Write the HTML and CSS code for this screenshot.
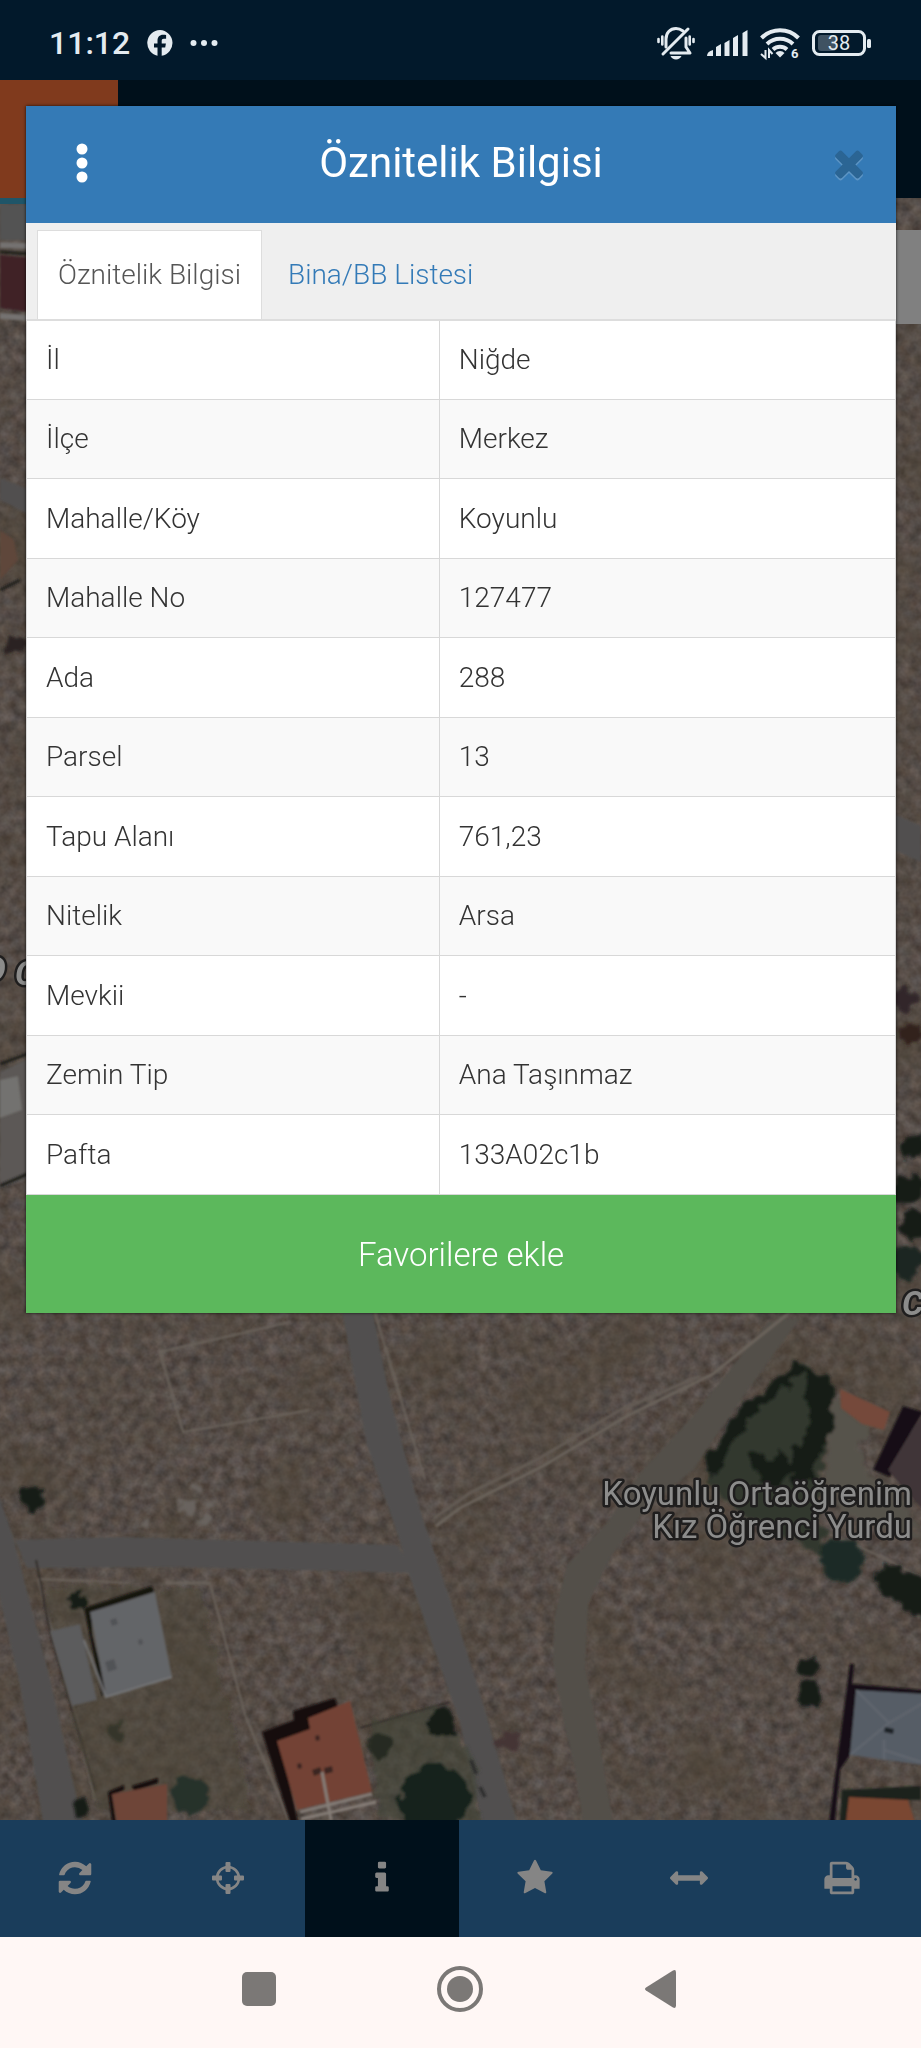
FILE: index.html
```html
<!DOCTYPE html>
<html lang="tr">
<head>
  <meta charset="UTF-8" />
  <title>Öznitelik Bilgisi</title>
  <meta name="viewport" content="width=device-width, initial-scale=1" />
  <link rel="stylesheet" href="styles.css">
</head>
<body>
  <div class="status-bar">
    <span class="clock">11:12</span>
    <svg class="fb-icon" viewBox="0 0 26 26" width="26" height="26" aria-hidden="true">
      <path fill="currentColor" d="M13 0a13 13 0 0 0-2.500 25.700v-8.200H7v-4h3.500v-2.500c0-4 2-6.200 5.600-6.200 1.200 0 2.300.1 3 .3v3.600h-2.200c-1.700 0-2.200.8-2.200 2.200v2.600h4.200l-.7 4h-3.500v8.300A13 13 0 0 0 13 0z"/>
    </svg>
    <svg class="more-icon" viewBox="0 0 28 8" width="28" height="8" aria-hidden="true">
      <g fill="currentColor"><circle cx="3.500" cy="4" r="3"/><circle cx="14" cy="4" r="3"/><circle cx="24.500" cy="4" r="3"/></g>
    </svg>
    <div class="status-icons">
      <svg viewBox="0 0 38 34" width="38" height="34" aria-hidden="true">
        <g fill="none" stroke="currentColor" stroke-width="3" stroke-linecap="round" stroke-linejoin="round">
          <path d="M9 21v-8c0-6 4-10.500 10-10.500 3 0 5 1 7 2.500M29 12v9l4 6H14"/>
          <path d="M31 3L6 28"/>
        </g>
        <g stroke="currentColor" stroke-width="2.600" stroke-linecap="round">
          <path d="M1.500 13v3M5.300 10.500v8M32.700 10.500v8M36.500 13v3"/>
        </g>
        <path fill="currentColor" d="M13.500 30h11c-1 2.200-3 3.500-5.500 3.500s-4.500-1.300-5.500-3.500z"/>
      </svg>
      <svg viewBox="0 0 41 28" width="41" height="28" aria-hidden="true">
        <path fill="currentColor" d="M0 27c0-3 2-5 6-6v6zM9 18l5-3v12H9zM17.500 14l5-3v16h-5zM26 9l5-3v21h-5zM35.500 4l5-3v26h-5z"/>
      </svg>
      <svg class="wifi-icon" viewBox="0 0 40 36" width="40" height="36" aria-hidden="true">
        <g fill="none" stroke="currentColor" stroke-width="4">
          <path d="M1.500 13a26 26 0 0 1 37 0M7 19a19 19 0 0 1 26 0M13 24.500a10.500 10.500 0 0 1 14 0"/>
        </g>
        <path fill="currentColor" d="M15.500 28a6 6 0 0 1 9 0L20 32.500z"/>
        <path fill="none" stroke="currentColor" stroke-width="2" d="M5.500 25v8L1 29M9 33v-8l3.500 4"/>
        <text x="31" y="33" font-size="13" font-weight="700" fill="currentColor">6</text>
      </svg>
      <svg viewBox="0 0 60 26" width="60" height="26" aria-hidden="true">
        <rect x="1.500" y="1.500" width="51" height="23" rx="6" fill="none" stroke="currentColor" stroke-width="3"/>
        <rect x="6" y="5" width="18" height="16" rx="3" fill="#3f5262"/>
        <rect x="55" y="9" width="4" height="9" rx="1.500" fill="currentColor"/>
        <text x="27" y="20" font-size="20" font-weight="400" text-anchor="middle" fill="currentColor">38</text>
      </svg>
    </div>
  </div>

  <div class="app">
    <div class="app-header">
      <div class="app-menu"></div>
    </div>

    <div class="map">
      <svg class="map-canvas" viewBox="0 198 921 1622" preserveAspectRatio="xMidYMid slice" aria-hidden="true">
        <defs>
          <filter id="ground" x="0" y="0" width="100%" height="100%" color-interpolation-filters="sRGB">
            <feTurbulence type="fractalNoise" baseFrequency="0.090" numOctaves="3" seed="7"/>
            <feColorMatrix values="0.200 0.060 0 0 0.205  0.200 0.020 0 0 0.190  0.200 0 0.030 0 0.165  0 0 0 0 1"/>
          </filter>
          <filter id="patches" x="0" y="0" width="100%" height="100%" color-interpolation-filters="sRGB">
            <feTurbulence type="fractalNoise" baseFrequency="0.012" numOctaves="3" seed="3"/>
            <feColorMatrix values="0 0 0 0 0.300  0 0 0 0 0.260  0 0 0 0 0.200  1.200 0 0 0 -0.500"/>
          </filter>
          <filter id="rough" x="-10%" y="-10%" width="120%" height="120%">
            <feTurbulence type="fractalNoise" baseFrequency="0.080" numOctaves="3" seed="5" result="n"/>
            <feDisplacementMap in="SourceGraphic" in2="n" scale="16" xChannelSelector="R" yChannelSelector="G"/>
            <feGaussianBlur stdDeviation="1.500"/>
          </filter>
          <filter id="soft" x="-10%" y="-10%" width="120%" height="120%">
            <feGaussianBlur stdDeviation="1"/>
          </filter>
        </defs>

        <rect y="198" width="921" height="1622" filter="url(#ground)"/>
        <rect y="198" width="921" height="1622" filter="url(#patches)"/>

        <!-- roads -->
        <g filter="url(#soft)">
          <g fill="#51504f">
            <path d="M340 1300L370 1300 388 1390 417 1500 440 1570 460 1630 485 1710 517 1822 482 1822 460 1723 430 1637 405 1562 400 1541 367 1445z"/>
            <path d="M15 1540L120 1537 397 1545 415 1573 300 1570 180 1567 27 1568z"/>
            <path d="M-2 1494L13 1537 30 1603 50 1679 82 1822 43 1822 20 1685 -2 1590z"/>
            <path d="M0 478L30 490 30 515 0 500zM890 812L921 826 921 862 890 848z"/>
            <path d="M0 1072L30 1058 30 1178 0 1188z" fill="#5b5956"/>
          </g>
          <path fill="#534f4a" d="M768 1322L693 1416 640 1473 607 1523 567 1565 555 1615 553 1661 563 1718 575 1768 583 1822 613 1822 598 1734 585 1669 588 1604 610 1558 647 1508 693 1470 743 1397 800 1318z"/>
          <g fill="none" stroke="#6b635b" stroke-width="3">
            <path d="M436 1526L460 1508 543 1466 627 1416 713 1374 790 1312"/>
            <path d="M434 1518L470 1493 540 1458 620 1410 700 1376" stroke="#645c55"/>
          </g>
          <g fill="none" stroke="#6b635c" stroke-width="2">
            <path d="M290 1322L160 1352 183 1432 310 1410"/>
            <path d="M38 1579L73 1707 95 1800M38 1579L130 1583M165 1583L210 1583 225 1640 245 1715 270 1775 290 1822"/>
            <path d="M375 1313L410 1430 425 1480M740 1500L820 1530 880 1556 921 1577M200 1785L165 1795"/>
          </g>
          <path d="M360 1728L450 1702M36 1560L50 1630 95 1790" fill="none" stroke="#302c28" stroke-width="2"/>
        </g>

        <!-- gardens -->
        <g filter="url(#rough)">
          <path fill="#4a4639" opacity="0.500" d="M45 1590L80 1585 200 1590 240 1760 250 1810 100 1810 70 1710z"/>
          <path fill="#3f4636" opacity="0.600" d="M370 1722L440 1705 475 1760 480 1822 380 1822z"/>
          <path fill="#33392e" d="M703 1466L727 1428 743 1405 797 1362 832 1380 828 1440 815 1500 830 1560 770 1530 723 1500z"/>
          <path fill="#57524b" d="M833 1400L880 1410 860 1450 870 1480 900 1490 921 1540 850 1520 825 1480z"/>
          <g fill="#121a17">
            <path d="M703 1466L727 1428 743 1405 797 1362 805 1372 760 1410 735 1440 715 1478z"/>
            <path d="M803 1368L832 1378 832 1430 808 1480 800 1450 810 1410z"/>
            <path d="M745 1452L757 1450 772 1460 780 1450 795 1470 770 1490zM790 1450L815 1440 815 1480 795 1490z"/>
            <circle cx="842" cy="1560" r="22" fill="#1b2a25"/>
            <circle cx="890" cy="1580" r="16"/><circle cx="910" cy="1590" r="18"/><circle cx="922" cy="1608" r="12"/>
            <circle cx="32" cy="1498" r="12"/><circle cx="808" cy="1668" r="11"/><circle cx="809" cy="1695" r="12"/>
            <circle cx="442" cy="1722" r="14"/><circle cx="435" cy="1800" r="36" fill="#14211c"/>
            <circle cx="190" cy="1795" r="18" fill="#27302a"/><circle cx="82" cy="1808" r="8"/><circle cx="79" cy="1600" r="8"/>
            <circle cx="117" cy="1732" r="9" fill="#343529"/><circle cx="380" cy="1745" r="13" fill="#272c20"/>
            <circle cx="914" cy="1148" r="13"/><circle cx="906" cy="1190" r="16"/><circle cx="916" cy="1225" r="15"/><circle cx="906" cy="1262" r="17" fill="#1d2820"/>
            <circle cx="15" cy="645" r="10" fill="#2c2220"/><circle cx="905" cy="1000" r="12" fill="#33282a"/><circle cx="910" cy="1035" r="11" fill="#30201f"/>
            <circle cx="510" cy="1741" r="10" fill="#453536"/>
          </g>
          <g fill="#69635e">
            <circle cx="196" cy="1488" r="5"/><circle cx="190" cy="1508" r="7"/><circle cx="203" cy="1520" r="6"/>
            <circle cx="180" cy="1504" r="4"/><circle cx="146" cy="1522" r="4"/><circle cx="212" cy="1504" r="4"/>
          </g>
        </g>

        <!-- buildings -->
        <g filter="url(#soft)">
          <path fill="#5c5c5d" d="M50 1631L80 1624 97 1700 72 1706z"/>
          <path fill="#171210" d="M84 1608L152 1586 154 1592 92 1612 92 1635 108 1692 102 1696z"/>
          <path fill="#646567" d="M90 1612L155 1592 172 1677 106 1697z"/>
          <path fill="none" stroke="#757678" stroke-width="2" d="M172 1677L106 1697 84 1640"/>
          <path fill="#515357" d="M105 1662l9-3 3 10-9 3zM110 1620l6-2 2 6-6 2zM138 1640l4-1 1 5-4 1z"/>
          <path fill="#140b0b" d="M262 1732L294 1720 293 1711 335 1698 338 1708 310 1722 310 1732 280 1742 298 1822 290 1822z"/>
          <path fill="#734335" d="M277 1741L310 1729 308 1718 350 1701 372 1792 297 1810z"/>
          <path fill="#3a2522" d="M312 1770l8-3 2 6-8 3zM324 1768l8-2 1 6-8 2zM297 1764l4-1 1 5-4 1zM315 1736l4-1 1 5-4 1z"/>
          <path fill="none" stroke="#857d77" stroke-width="3" d="M322 1772l9 48M300 1812l72-18M301 1819l75-17"/>
          <path fill="#140b0b" d="M108 1792L124 1785 124 1790 112 1795 116 1822 112 1822zM132 1786L158 1778 158 1783 134 1791z"/>
          <path fill="#6e4439" d="M112 1794L167 1784 167 1822 117 1822z"/>
          <path fill="#74493a" d="M840 1389L890 1412 884 1430 862 1424 841 1408z"/>
          <path fill="#131012" d="M903 1406L923 1412 912 1430 890 1477 873 1470z"/>
          <path fill="#3f3438" d="M912 1430L923 1414 923 1510 888 1470z"/>
          <path fill="#131012" d="M850 1664L854 1664 852 1684 923 1690 923 1694 856 1692 850 1755 840 1770 835 1822 829 1822z"/>
          <path fill="#575d66" d="M856 1690L923 1694 923 1765 850 1755z"/>
          <path fill="none" stroke="#62676f" stroke-width="2" d="M856 1690l33 33 34-20M889 1723l-39 32M884 1740v20M884 1750l37 12"/>
          <path fill="#1c2026" d="M885 1727l9 2-1 5-9-2z"/>
          <path fill="#1c211d" d="M842 1790L921 1786 921 1800 850 1800 850 1822 840 1822z"/>
          <path fill="#7a4632" d="M849 1797L908 1800 915 1822 846 1822z"/>
          <path fill="#402227" d="M0 255L30 258 30 312 0 308z"/>
          <path fill="#535252" d="M0 204L30 204 30 240 0 240z"/>
          <path fill="none" stroke="#747271" stroke-width="6" d="M0 245L30 246M0 316L30 318"/>
          <path fill="none" stroke="#22201e" stroke-width="3" d="M0 252L30 254M0 1064L30 1053M0 1186L30 1173M0 590L20 580"/>
          <path fill="#5f463a" d="M0 530L14 540 18 560 0 580z"/>
          <path fill="#737270" d="M0 1080L18 1076 22 1110 0 1118z"/>
          <path fill="none" stroke="#2c2c2c" stroke-width="3" d="M471 1760l5 14M480 1787l5 10"/>
        </g>

        <rect class="teal-edge" y="198" width="118" height="6"/>
        <g class="map-label">
          <text x="912" y="1505" text-anchor="end">Koyunlu Ortaöğrenim</text>
          <text x="912" y="1538" text-anchor="end">Kız Öğrenci Yurdu</text>
        </g>
        <g class="road-label">
          <text x="-17" y="981">O</text>
          <text x="15" y="985">C</text>
          <text x="902" y="1315">C</text>
        </g>
      </svg>
      <div class="map-control"></div>
    </div>

    <div class="toolbar">
      <button class="tool" aria-label="Yenile">
        <svg viewBox="0 0 1792 1792"><path d="M1639 1056q0 5-1 7-64 268-268 434.500t-478 166.500q-146 0-282.500-55t-243.500-157l-129 129q-19 19-45 19t-45-19-19-45v-448q0-26 19-45t45-19h448q26 0 45 19t19 45-19 45l-137 137q71 66 161 102t187 36q134 0 250-65t186-179q11-17 53-117 8-23 30-23h192q13 0 22.500 9.500t9.500 22.500zm25-800v448q0 26-19 45t-45 19h-448q-26 0-45-19t-19-45 19-45l138-138q-148-137-349-137-134 0-250 65t-186 179q-11 17-53 117-8 23-30 23h-199q-13 0-22.500-9.500t-9.500-22.500v-7q65-268 270-434.500t480-166.500q146 0 284 55.500t245 156.500l130-129q19-19 45-19t45 19 19 45z"/></svg>
      </button>
      <button class="tool" aria-label="Konum">
        <svg viewBox="0 0 38 38"><circle cx="19" cy="19" r="11" fill="none" stroke="currentColor" stroke-width="2.600"/><path d="M17.500 3h3a1 1 0 0 1 1 1v8a1 1 0 0 1-1 1h-3a1 1 0 0 1-1-1V4a1 1 0 0 1 1-1zM17.500 25h3a1 1 0 0 1 1 1v8a1 1 0 0 1-1 1h-3a1 1 0 0 1-1-1v-8a1 1 0 0 1 1-1zM4 16.500h8a1 1 0 0 1 1 1v3a1 1 0 0 1-1 1H4a1 1 0 0 1-1-1v-3a1 1 0 0 1 1-1zM26 16.500h8a1 1 0 0 1 1 1v3a1 1 0 0 1-1 1h-8a1 1 0 0 1-1-1v-3a1 1 0 0 1 1-1z"/></svg>
      </button>
      <button class="tool active" aria-label="Bilgi">
        <svg viewBox="0 0 1792 1792"><path d="M1216 1344v128q0 26-19 45t-45 19h-512q-26 0-45-19t-19-45v-128q0-26 19-45t45-19h64v-384h-64q-26 0-45-19t-19-45v-128q0-26 19-45t45-19h384q26 0 45 19t19 45v576h64q26 0 45 19t19 45zm-128-1152v192q0 26-19 45t-45 19h-256q-26 0-45-19t-19-45v-192q0-26 19-45t45-19h256q26 0 45 19t19 45z"/></svg>
      </button>
      <button class="tool" aria-label="Favoriler">
        <svg viewBox="0 0 1792 1792"><path d="M1728 647q0 22-26 48l-363 354 86 500q1 7 1 20 0 21-10.500 35.500t-30.500 14.500q-19 0-40-12l-449-236-449 236q-22 12-40 12-21 0-31.500-14.500t-10.500-35.500q0-6 2-20l86-500-364-354q-25-27-25-48 0-37 56-46l502-73 225-455q19-41 49-41t49 41l225 455 502 73q56 9 56 46z"/></svg>
      </button>
      <button class="tool" aria-label="Ölç">
        <svg viewBox="0 0 1792 1792"><path d="M1792 896q0 26-19 45l-256 256q-19 19-45 19t-45-19-19-45v-128h-1024v128q0 26-19 45t-45 19-45-19l-256-256q-19-19-19-45t19-45l256-256q19-19 45-19t45 19 19 45v128h1024v-128q0-26 19-45t45-19 45 19l256 256q19 19 19 45z"/></svg>
      </button>
      <button class="tool" aria-label="Yazdır">
        <svg viewBox="0 0 1792 1792"><path d="M448 1536h896v-256h-896v256zm0-640h896v-384h-160q-40 0-68-28t-28-68v-160h-640v640zm1152 64q0-26-19-45t-45-19-45 19-19 45 19 45 45 19 45-19 19-45zm128 0v416q0 13-9.500 22.500t-22.500 9.500h-224v160q0 40-28 68t-68 28h-960q-40 0-68-28t-28-68v-160h-224q-13 0-22.500-9.500t-9.500-22.500v-416q0-79 56.500-135.500t135.500-56.500h64v-544q0-40 28-68t68-28h672q40 0 88 20t76 48l152 152q28 28 48 76t20 88v256h64q79 0 135.500 56.500t56.500 135.500z"/></svg>
      </button>
    </div>

    <div class="modal">
      <div class="dialog" role="dialog" aria-labelledby="dialogTitle">
        <div class="dialog-header">
          <button class="menu-btn" aria-label="Menü">
            <svg viewBox="0 0 12 40" width="12" height="40"><g fill="currentColor"><circle cx="6" cy="6" r="5.500"/><circle cx="6" cy="20" r="5.500"/><circle cx="6" cy="34" r="5.500"/></g></svg>
          </button>
          <h1 class="dialog-title" id="dialogTitle">Öznitelik Bilgisi</h1>
          <button class="close-btn" aria-label="Kapat">
            <svg viewBox="0 0 1792 1792" width="42" height="42"><path fill="currentColor" d="M1490 1322q0 40-28 68l-136 136q-28 28-68 28t-68-28l-294-294-294 294q-28 28-68 28t-68-28l-136-136q-28-28-28-68t28-68l294-294-294-294q-28-28-28-68t28-68l136-136q28-28 68-28t68 28l294 294 294-294q28-28 68-28t68 28l136 136q28 28 28 68t-28 68l-294 294 294 294q28 28 28 68z"/></svg>
          </button>
        </div>
        <div class="tabs">
          <a class="tab active" href="#oznitelik">Öznitelik Bilgisi</a>
          <a class="tab" href="#bina">Bina/BB Listesi</a>
        </div>
        <table class="info-table" id="oznitelik">
          <tbody>
            <tr><th scope="row">İl</th><td>Niğde</td></tr>
            <tr><th scope="row">İlçe</th><td>Merkez</td></tr>
            <tr><th scope="row">Mahalle/Köy</th><td>Koyunlu</td></tr>
            <tr><th scope="row">Mahalle No</th><td>127477</td></tr>
            <tr><th scope="row">Ada</th><td>288</td></tr>
            <tr><th scope="row">Parsel</th><td>13</td></tr>
            <tr><th scope="row">Tapu Alanı</th><td>761,23</td></tr>
            <tr><th scope="row">Nitelik</th><td>Arsa</td></tr>
            <tr><th scope="row">Mevkii</th><td>-</td></tr>
            <tr><th scope="row">Zemin Tip</th><td>Ana Taşınmaz</td></tr>
            <tr><th scope="row">Pafta</th><td>133A02c1b</td></tr>
          </tbody>
        </table>
        <button class="favorite-btn">Favorilere ekle</button>
      </div>
    </div>
  </div>

  <div class="nav-bar">
    <button class="nav-btn" aria-label="Son uygulamalar">
      <svg viewBox="0 0 48 48"><rect x="7" y="7" width="34" height="34" rx="5"/></svg>
    </button>
    <button class="nav-btn" aria-label="Ana ekran">
      <svg viewBox="0 0 48 48"><circle cx="24" cy="24" r="21" fill="none" stroke="currentColor" stroke-width="4"/><circle cx="24" cy="24" r="13"/></svg>
    </button>
    <button class="nav-btn" aria-label="Geri">
      <svg viewBox="0 0 48 48"><path d="M9 22.500L36 5.500q3-1.500 3 2v33q0 3.500-3 2L9 25.500q-2-1.500 0-3z"/></svg>
    </button>
  </div>
</body>
</html>
```
FILE: styles.css
```css
* { box-sizing: border-box; }
body { margin: 0; min-height: 100vh; display: flex; flex-direction: column; font-family: Roboto, "Noto Sans", sans-serif; font-weight: 300; font-size: 28px; color: #333; background: #02192b; }
button { font: inherit; border: none; background: none; padding: 0; cursor: pointer; }

/* phone status bar */
.status-bar { display: flex; align-items: center; height: 80px; padding: 6px 49px 0; background: #02192b; color: #e4ebf0; }
.clock { font-size: 32px; font-weight: 500; line-height: 40px; }
.fb-icon { margin-left: 17px; }
.more-icon { margin-left: 17px; }
.status-icons { display: flex; align-items: center; gap: 12px; margin-left: auto; }

/* app behind the dialog */
.app { position: relative; flex: 1; display: flex; flex-direction: column; }
.app-header { display: flex; height: 118px; background: #00101b; }
.app-menu { width: 118px; background: #803a1d; }
.map { position: relative; flex: 1; overflow: hidden; background: #57504b; }
.map-canvas { position: absolute; inset: 0; width: 100%; height: 100%; }
.teal-edge { fill: #1f5568; }
.map-label text, .road-label text { fill: #8c8c8b; stroke: #1f1e1e; stroke-width: 5px; paint-order: stroke; stroke-linejoin: round; }
.map-label { font-size: 33px; font-weight: 400; }
.road-label { font-size: 34px; font-weight: 700; font-style: italic; }
.map-control { position: absolute; top: 32px; right: 0; width: 60px; height: 94px; background: #808080; }
.toolbar { display: grid; grid-template-columns: repeat(6, 1fr); height: 117px; margin-left: -2px; padding-right: 2px; background: #1a3d5b; }
.tool { display: flex; align-items: center; justify-content: center; padding-bottom: 2px; color: #858585; }
.tool.active { background: #00101b; }
.tool svg { width: 38px; height: 38px; fill: currentColor; }

/* dialog */
.modal { position: absolute; inset: 0; padding: 26px 25px 0 26px; }
.dialog { background: #fff; box-shadow: 0 0 3px rgba(0,0,0,0.8); }
.dialog-header { display: grid; grid-template-columns: 1fr auto 1fr; align-items: center; height: 117px; padding: 0 26px 4px; background: #347ab6; color: #fff; }
.menu-btn { display: flex; justify-content: center; width: 60px; color: #fff; }
.dialog-title { margin: 0; font-size: 42px; font-weight: 400; line-height: 48px; }
.close-btn { display: flex; justify-self: end; color: #2b6594; filter: drop-shadow(0 2px 0 #5d95c5); }
.tabs { display: flex; gap: 6px; height: 98px; padding: 7px 11px 0; background: #efefef; border-bottom: 2px solid #ddd; }
.tab { padding: 27px 20px 0; line-height: 36px; color: #337ab7; text-decoration: none; }
.tab.active { color: #555; background: #fff; border: 1px solid #ddd; border-bottom: none; padding-top: 26px; }
.info-table { width: 100%; height: 874px; border-collapse: collapse; table-layout: fixed; }
.info-table th, .info-table td { padding: 0 19px; border: 1px solid #d8d8d8; line-height: 36px; text-align: left; font-weight: 300; }
.info-table th { width: 47.5%; }
.info-table tr:nth-child(even) { background: #f9f9f9; }
.info-table tr:first-child > * { border-top: none; }
.favorite-btn { display: block; width: 100%; height: 118px; background: #5cb85c; color: #fff; font-size: 33px; }

/* system navigation */
.nav-bar { display: flex; justify-content: center; align-items: center; height: 111px; padding: 0 2px 8px 0; background: #fff7f5; }
.nav-btn { display: flex; justify-content: center; width: 201px; color: #7b7876; }
.nav-btn svg { width: 48px; height: 48px; fill: currentColor; }
```
